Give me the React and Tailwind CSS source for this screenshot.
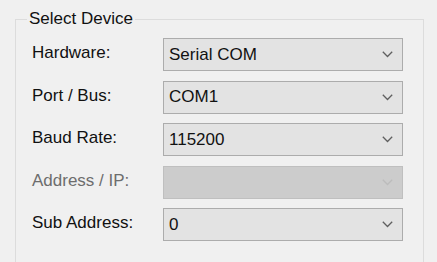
import React from "react";

const rows = [
  { label: "Hardware:", value: "Serial COM" },
  { label: "Port / Bus:", value: "COM1" },
  { label: "Baud Rate:", value: "115200" },
  { label: "Address / IP:", value: "", disabled: true },
  { label: "Sub Address:", value: "0" },
];

function Chevron({ disabled }) {
  return (
    <svg width="11" height="7" viewBox="0 0 11 7" className="shrink-0">
      <polyline
        points="0.8,0.8 5.5,5.5 10.2,0.8"
        fill="none"
        stroke={disabled ? "#bcbcbc" : "#5f5f5f"}
        strokeWidth="1.3"
      />
    </svg>
  );
}

function Combo({ value, disabled }) {
  return (
    <div
      className={
        "h-[33px] w-[240px] flex items-center justify-between pl-[5px] pr-[9px] border " +
        (disabled ? "bg-[#cccccc] border-[#bfbfbf]" : "bg-[#e3e3e3] border-[#acacac]")
      }
    >
      <span className="text-[#111]">{value}</span>
      <Chevron disabled={disabled} />
    </div>
  );
}

export default function App() {
  return (
    <div
      className="w-[437px] h-[262px] overflow-hidden bg-[#f0f0f0] pt-[9px] pl-[15px] text-[17px] leading-[20px]"
      style={{ fontFamily: '"Liberation Sans", Arial, sans-serif' }}
    >
      <fieldset className="w-[409px] h-[280px] border border-[#dcdcdc] m-0 pl-[16px] pt-[9px]">
        <legend className="-ml-[5px] px-[2px] text-[#111]">Select Device</legend>
        <div className="flex flex-col gap-[9.5px]">
          {rows.map((r) => (
            <div key={r.label} className="flex items-center">
              <div
                className={
                  "w-[131px] -mt-[3px] " + (r.disabled ? "text-[#6d6d6d]" : "text-[#111]")
                }
              >
                {r.label}
              </div>
              <Combo value={r.value} disabled={r.disabled} />
            </div>
          ))}
        </div>
      </fieldset>
    </div>
  );
}
